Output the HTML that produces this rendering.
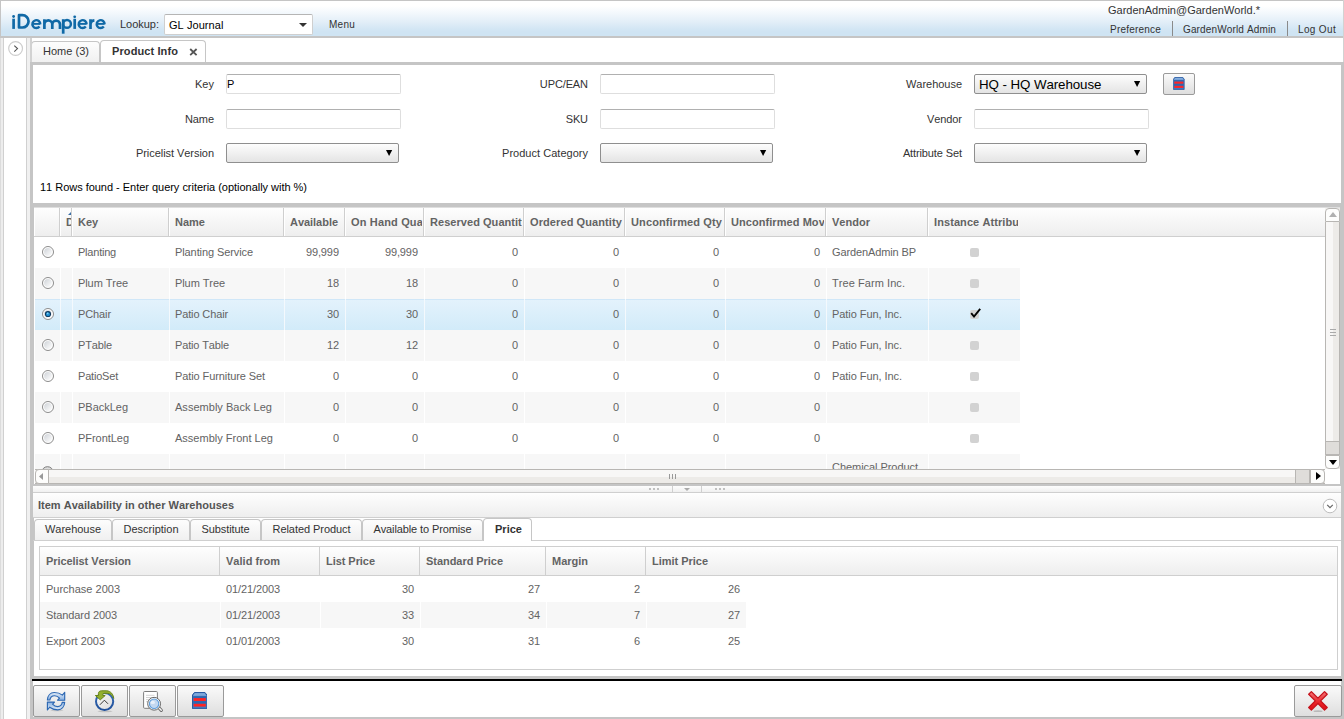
<!DOCTYPE html>
<html><head><meta charset="utf-8"><title>iDempiere</title>
<style>
*{box-sizing:border-box;margin:0;padding:0}
html,body{font-kerning:none;width:1344px;height:719px;overflow:hidden;background:#fff;font-family:"Liberation Sans",sans-serif;font-size:11px;color:#333}
div,span,svg{position:absolute}
.t{white-space:nowrap;line-height:14px;height:14px}
.r{text-align:right}
.b{font-weight:bold}
.sm{font-size:10px;color:#333}
.g{color:#636363}
.in{border:1px solid #dedede;border-top-color:#b0b0b0;border-radius:2px;background:#fff}
.sel{border:1px solid #8f8f8f;border-radius:2px;background:linear-gradient(#fdfdfd,#e4e4e4 )}
.btn{border:1px solid #9a9a9a;border-radius:2px;background:linear-gradient(#fafafa,#dedede)}
.hd{background:linear-gradient(#fefefe,#eeeeee)}
.tab{border:1px solid #c6c6c6;border-bottom:none;border-radius:4px 4px 0 0;background:linear-gradient(#fdfdfd,#f0f0f0)}
.tabs{border:1px solid #c6c6c6;border-bottom:none;border-radius:4px 4px 0 0;background:#fff}
</style></head><body>
<div class="" style="left:0px;top:0px;width:1344px;height:38px;background:linear-gradient(#fff 0,#fff 5px,#f1f7fc 13px,#e2eef8 21px,#d3e6f4 28px,#cfe4f3 31px,#cfe4f3 100%);border-top:1px solid #c5c5c5;border-left:1px solid #c5c5c5;border-bottom:2px solid #c5c5c5"></div>
<svg style="left:0;top:0" width="112" height="38" fill="none" stroke="#1069a6" stroke-width="2.7" stroke-linejoin="round">
<circle cx="13.6" cy="16.5" r="1.4" fill="#1069a6" stroke="none"/><path d="M13.6 18.7V28.9"/>
<path d="M19.0 15.2H22.4A6.15 6.15 0 0 1 22.4 27.5H19.0Z"/>
<path d="M32.9 23.9H40.3" stroke-width="1.9"/><path d="M40.3 24.3A3.95 3.95 0 1 0 39.5 26.5" stroke-width="2.4"/>
<path d="M44.4 28.9V19.2M44.4 24.4A3.95 3.95 0 0 1 52.3 24.4V28.9M52.3 24.4A3.85 3.85 0 0 1 60.0 24.4V28.9"/>
<path d="M63.2 19.2V33.7"/><circle cx="67.0" cy="23.9" r="3.9" stroke-width="2.5"/>
<circle cx="74.7" cy="16.8" r="1.4" fill="#1069a6" stroke="none"/><path d="M74.7 18.8V28.9"/>
<path d="M79.0 23.9H86.6" stroke-width="1.9"/><path d="M86.6 24.3A3.95 3.95 0 1 0 85.8 26.5" stroke-width="2.4"/>
<path d="M90.5 28.9V19.2M90.5 24.6A4.3 4.3 0 0 1 94.4 20.4"/>
<path d="M97.0 23.9H104.6" stroke-width="1.9"/><path d="M104.6 24.3A3.95 3.95 0 1 0 103.8 26.5" stroke-width="2.4"/>
</svg>
<span class="t " style="left:120px;top:17px;letter-spacing:-0.021px;color:#333">Lookup:</span>
<div class="" style="left:164px;top:14px;width:149px;height:21px;border:1px solid #cfcfcf;border-top-color:#b5b5b5;border-radius:2px;background:#fff"></div>
<span class="t " style="left:169px;top:18px;letter-spacing:0.019px;color:#000;letter-spacing:0.06px">GL Journal</span>
<svg style="left:299px;top:23px" width="8" height="4"><path d="M0 0H8L4 4Z" fill="#333"/></svg>
<span class="t sm" style="left:329px;top:18px;letter-spacing:0.246px;">Menu</span>
<span class="t " style="left:1108px;top:3px;letter-spacing:-0.071px;color:#333;letter-spacing:0.01px">GardenAdmin@GardenWorld.*</span>
<span class="t sm" style="left:1110px;top:23px;letter-spacing:0.208px;">Preference</span>
<span class="t sm" style="left:1183px;top:23px;letter-spacing:0.142px;">GardenWorld Admin</span>
<span class="t sm" style="left:1298px;top:23px;letter-spacing:0.346px;">Log Out</span>
<div class="" style="left:1172px;top:21px;width:1px;height:15px;background:#8a8a8a"></div>
<div class="" style="left:1287px;top:21px;width:1px;height:15px;background:#8a8a8a"></div>
<div class="" style="left:0px;top:38px;width:4px;height:681px;background:#ededed"></div>
<div class="" style="left:3px;top:38px;width:1px;height:681px;background:#d0d0d0"></div>
<div class="" style="left:0px;top:38px;width:1px;height:681px;background:#dcdcdc"></div>
<div class="" style="left:26px;top:38px;width:1px;height:681px;background:#d0d0d0"></div>
<div class="" style="left:27px;top:38px;width:3px;height:681px;background:#f0f0f0"></div>
<svg style="left:8px;top:40px" width="16" height="16"><circle cx="7.6" cy="8.5" r="6.9" fill="#fff" stroke="#cdcdcd" stroke-width="1.2"/><path d="M6.3 5.6L9.5 8.6L6.3 11.6" fill="none" stroke="#555" stroke-width="1.1"/></svg>
<div class="tab" style="left:31px;top:41px;width:69px;height:22px;"></div>
<span class="t " style="left:43px;top:44px;letter-spacing:0.02px;color:#333">Home (3)</span>
<div class="tabs" style="left:100px;top:40px;width:106px;height:22px;"></div>
<span class="t b" style="left:112px;top:44px;letter-spacing:0.102px;color:#333;z-index:4">Product Info</span>
<svg style="left:189px;top:48px;z-index:4" width="9" height="8"><path d="M1.2 1L7.6 7.2M7.6 1L1.2 7.2" stroke="#555" stroke-width="1.8"/></svg>
<div class="" style="left:30px;top:62px;width:1314px;height:3px;background:#c5c5c5"></div>
<div class="" style="left:30px;top:38px;width:2px;height:30px;background:#d2d2d2"></div>
<div class="" style="left:1343px;top:0px;width:1px;height:62px;background:#d2d2d2"></div>
<div class="" style="left:30px;top:62px;width:3px;height:657px;background:#c5c5c5"></div>
<div class="" style="left:1341px;top:62px;width:3px;height:657px;background:#c5c5c5"></div>
<div class="" style="left:30px;top:717px;width:1314px;height:2px;background:#c5c5c5"></div>
<span class="t r " style="right:1129.985px;top:77px;letter-spacing:0.015px;">Key</span>
<div class="in" style="left:226px;top:74px;width:175px;height:20px;"></div>
<span class="t " style="left:227px;top:77px;letter-spacing:-0.337px;color:#000">P</span>
<span class="t r " style="right:1130.086px;top:112px;letter-spacing:-0.086px;">Name</span>
<div class="in" style="left:226px;top:109px;width:175px;height:20px;"></div>
<span class="t r " style="right:1130.05px;top:146px;letter-spacing:-0.05px;">Pricelist Version</span>
<div class="sel" style="left:226px;top:143px;width:173px;height:20px;"></div>
<svg style="left:385.5px;top:150px" width="7" height="7"><path d="M0 0H6.2L3.1 6Z" fill="#000"/></svg>
<span class="t r " style="right:756.128px;top:77px;letter-spacing:-0.128px;">UPC/EAN</span>
<div class="in" style="left:600px;top:74px;width:175px;height:20px;"></div>
<span class="t r " style="right:756.206px;top:112px;letter-spacing:-0.206px;">SKU</span>
<div class="in" style="left:600px;top:109px;width:175px;height:20px;"></div>
<span class="t r " style="right:755.975px;top:146px;letter-spacing:0.025px;">Product Category</span>
<div class="sel" style="left:600px;top:143px;width:173px;height:20px;"></div>
<svg style="left:759.5px;top:150px" width="7" height="7"><path d="M0 0H6.2L3.1 6Z" fill="#000"/></svg>
<span class="t r " style="right:382.028px;top:77px;letter-spacing:-0.028px;">Warehouse</span>
<div class="sel" style="left:974px;top:74px;width:173px;height:20px;"></div>
<svg style="left:1133.5px;top:81px" width="7" height="7"><path d="M0 0H6.2L3.1 6Z" fill="#000"/></svg>
<span class="t " style="left:979px;top:77px;letter-spacing:0px;font-size:13.33px;color:#000;line-height:15px;letter-spacing:-0.08px">HQ - HQ Warehouse</span>
<span class="t r " style="right:382.078px;top:112px;letter-spacing:-0.078px;">Vendor</span>
<div class="in" style="left:974px;top:109px;width:175px;height:20px;"></div>
<span class="t r " style="right:382.118px;top:146px;letter-spacing:-0.118px;">Attribute Set</span>
<div class="sel" style="left:974px;top:143px;width:173px;height:20px;"></div>
<svg style="left:1133.5px;top:150px" width="7" height="7"><path d="M0 0H6.2L3.1 6Z" fill="#000"/></svg>
<div class="btn" style="left:1163px;top:73px;width:32px;height:22px;"></div>
<svg style="left:1173px;top:77.1px" width="11.6" height="12.9" viewBox="0 0 15.4 17.2"><defs><linearGradient id="wgb" x1="0" y1="0" x2="0" y2="1"><stop offset="0" stop-color="#8db4e2"/><stop offset="1" stop-color="#6d9ad1"/></linearGradient></defs><path d="M0.5 3 L2.4 0.5 H13 L14.9 3 V16.7 H0.5Z" fill="#3f78c0" stroke="#28589f" stroke-width="1" stroke-linejoin="round"/><path d="M1.3 3.2 L2.8 1.2 H12.6 L14.1 3.2 V4.2 H1.3Z" fill="url(#wgb)"/><rect x="1.3" y="4.2" width="12.8" height="1.9" fill="#2c66b0"/><rect x="1.6" y="6.1" width="12.2" height="3.0" fill="#ff2424"/><rect x="1.3" y="9.1" width="12.8" height="2.7" fill="#2c66b0"/><rect x="1.6" y="11.8" width="12.2" height="2.8" fill="#ff2424"/></svg>
<span class="t " style="left:40px;top:180px;letter-spacing:-0.025px;color:#000">11 Rows found - Enter query criteria (optionally with %)</span>
<div class="" style="left:33px;top:203px;width:1308px;height:4px;background:#c5c5c5"></div>
<div class="" style="left:33px;top:207px;width:1308px;height:1px;background:#dedede"></div>
<div class="" style="left:33px;top:203px;width:1px;height:473px;background:#c5c5c5"></div>
<div class="" style="left:1340px;top:203px;width:1px;height:283px;background:#c5c5c5"></div>
<div class="hd" style="left:35px;top:208px;width:1290px;height:29px;border-bottom:1px solid #cfcfcf"></div>
<div class="" style="left:34px;top:236px;width:1px;height:1px;background:#cfcfcf"></div>
<div class="" style="left:59px;top:208px;width:1px;height:28px;background:#cfcfcf"></div>
<div class="" style="left:60px;top:208px;width:1px;height:28px;background:#fff"></div>
<div class="" style="left:71px;top:208px;width:1px;height:28px;background:#cfcfcf"></div>
<div class="" style="left:72px;top:208px;width:1px;height:28px;background:#fff"></div>
<div class="" style="left:60px;top:207px;width:11px;height:29px;overflow:hidden"><span class="t b g" style="left:6px;top:8px;letter-spacing:0.056px">D</span></div>
<div class="" style="left:168px;top:208px;width:1px;height:28px;background:#cfcfcf"></div>
<div class="" style="left:169px;top:208px;width:1px;height:28px;background:#fff"></div>
<div class="" style="left:72px;top:207px;width:95px;height:29px;overflow:hidden"><span class="t b g" style="left:6px;top:8px;letter-spacing:-0.06px">Key</span></div>
<div class="" style="left:283px;top:208px;width:1px;height:28px;background:#cfcfcf"></div>
<div class="" style="left:284px;top:208px;width:1px;height:28px;background:#fff"></div>
<div class="" style="left:169px;top:207px;width:113px;height:29px;overflow:hidden"><span class="t b g" style="left:6px;top:8px;letter-spacing:0.01px">Name</span></div>
<div class="" style="left:344px;top:208px;width:1px;height:28px;background:#cfcfcf"></div>
<div class="" style="left:345px;top:208px;width:1px;height:28px;background:#fff"></div>
<div class="" style="left:284px;top:207px;width:59px;height:29px;overflow:hidden"><span class="t b g" style="left:6px;top:8px;letter-spacing:-0.034px">Available</span></div>
<div class="" style="left:423px;top:208px;width:1px;height:28px;background:#cfcfcf"></div>
<div class="" style="left:424px;top:208px;width:1px;height:28px;background:#fff"></div>
<div class="" style="left:345px;top:207px;width:77px;height:29px;overflow:hidden"><span class="t b g" style="left:6px;top:8px;letter-spacing:0.156px">On Hand Quantity</span></div>
<div class="" style="left:523px;top:208px;width:1px;height:28px;background:#cfcfcf"></div>
<div class="" style="left:524px;top:208px;width:1px;height:28px;background:#fff"></div>
<div class="" style="left:424px;top:207px;width:98px;height:29px;overflow:hidden"><span class="t b g" style="left:6px;top:8px;letter-spacing:0.047px">Reserved Quantity</span></div>
<div class="" style="left:624px;top:208px;width:1px;height:28px;background:#cfcfcf"></div>
<div class="" style="left:625px;top:208px;width:1px;height:28px;background:#fff"></div>
<div class="" style="left:524px;top:207px;width:99px;height:29px;overflow:hidden"><span class="t b g" style="left:6px;top:8px;letter-spacing:0.096px">Ordered Quantity</span></div>
<div class="" style="left:724px;top:208px;width:1px;height:28px;background:#cfcfcf"></div>
<div class="" style="left:725px;top:208px;width:1px;height:28px;background:#fff"></div>
<div class="" style="left:625px;top:207px;width:98px;height:29px;overflow:hidden"><span class="t b g" style="left:6px;top:8px;letter-spacing:0.118px">Unconfirmed Qty</span></div>
<div class="" style="left:825px;top:208px;width:1px;height:28px;background:#cfcfcf"></div>
<div class="" style="left:826px;top:208px;width:1px;height:28px;background:#fff"></div>
<div class="" style="left:725px;top:207px;width:99px;height:29px;overflow:hidden"><span class="t b g" style="left:6px;top:8px;letter-spacing:0.062px">Unconfirmed Move</span></div>
<div class="" style="left:927px;top:208px;width:1px;height:28px;background:#cfcfcf"></div>
<div class="" style="left:928px;top:208px;width:1px;height:28px;background:#fff"></div>
<div class="" style="left:826px;top:207px;width:100px;height:29px;overflow:hidden"><span class="t b g" style="left:6px;top:8px;letter-spacing:0.018px">Vendor</span></div>
<div class="" style="left:928px;top:207px;width:90px;height:29px;overflow:hidden"><span class="t b g" style="left:6px;top:8px;letter-spacing:0.083px">Instance Attribute</span></div>
<svg style="left:68px;top:212px" width="3" height="3"><path d="M3 0V3H0Z" fill="#3a6ea5"/></svg>
<div class="" style="left:35px;top:237px;width:985px;height:31px;background:#fff"></div>
<svg style="left:41px;top:245px" width="14" height="14"><defs><linearGradient id="rg" x1="0" y1="0" x2="1" y2="1"><stop offset="0" stop-color="#cfd3d8"/><stop offset="1" stop-color="#fff"/></linearGradient></defs><circle cx="7" cy="7" r="5.5" fill="#fff" stroke="#8c8c8c" stroke-width="1"/><circle cx="7" cy="7" r="3.9" fill="url(#rg)"/></svg>
<span class="t g" style="left:78px;top:245px;letter-spacing:-0.219px;">Planting</span>
<span class="t g" style="left:175px;top:245px;letter-spacing:-0.093px;">Planting Service</span>
<span class="t r g" style="right:1005.107px;top:245px;letter-spacing:-0.107px;">99,999</span>
<span class="t r g" style="right:926.107px;top:245px;letter-spacing:-0.107px;">99,999</span>
<span class="t r g" style="right:826.118px;top:245px;letter-spacing:-0.118px;">0</span>
<span class="t r g" style="right:725.118px;top:245px;letter-spacing:-0.118px;">0</span>
<span class="t r g" style="right:625.118px;top:245px;letter-spacing:-0.118px;">0</span>
<span class="t r g" style="right:524.118px;top:245px;letter-spacing:-0.118px;">0</span>
<span class="t g" style="left:832px;top:245px;letter-spacing:-0.114px;">GardenAdmin BP</span>
<div class="" style="left:970px;top:248px;width:9px;height:9px;background:#d2d2d2;border-radius:2px"></div>
<div class="" style="left:35px;top:268px;width:985px;height:31px;background:#f7f7f7"></div>
<div class="" style="left:60px;top:268px;width:1px;height:31px;background:#fff"></div>
<div class="" style="left:72px;top:268px;width:1px;height:31px;background:#fff"></div>
<div class="" style="left:169px;top:268px;width:1px;height:31px;background:#fff"></div>
<div class="" style="left:284px;top:268px;width:1px;height:31px;background:#fff"></div>
<div class="" style="left:345px;top:268px;width:1px;height:31px;background:#fff"></div>
<div class="" style="left:424px;top:268px;width:1px;height:31px;background:#fff"></div>
<div class="" style="left:524px;top:268px;width:1px;height:31px;background:#fff"></div>
<div class="" style="left:625px;top:268px;width:1px;height:31px;background:#fff"></div>
<div class="" style="left:725px;top:268px;width:1px;height:31px;background:#fff"></div>
<div class="" style="left:826px;top:268px;width:1px;height:31px;background:#fff"></div>
<div class="" style="left:928px;top:268px;width:1px;height:31px;background:#fff"></div>
<svg style="left:41px;top:276px" width="14" height="14"><defs><linearGradient id="rg" x1="0" y1="0" x2="1" y2="1"><stop offset="0" stop-color="#cfd3d8"/><stop offset="1" stop-color="#fff"/></linearGradient></defs><circle cx="7" cy="7" r="5.5" fill="#fff" stroke="#8c8c8c" stroke-width="1"/><circle cx="7" cy="7" r="3.9" fill="url(#rg)"/></svg>
<span class="t g" style="left:78px;top:276px;letter-spacing:-0.082px;">Plum Tree</span>
<span class="t g" style="left:175px;top:276px;letter-spacing:-0.082px;">Plum Tree</span>
<span class="t r g" style="right:1005.118px;top:276px;letter-spacing:-0.118px;">18</span>
<span class="t r g" style="right:926.118px;top:276px;letter-spacing:-0.118px;">18</span>
<span class="t r g" style="right:826.118px;top:276px;letter-spacing:-0.118px;">0</span>
<span class="t r g" style="right:725.118px;top:276px;letter-spacing:-0.118px;">0</span>
<span class="t r g" style="right:625.118px;top:276px;letter-spacing:-0.118px;">0</span>
<span class="t r g" style="right:524.118px;top:276px;letter-spacing:-0.118px;">0</span>
<span class="t g" style="left:832px;top:276px;letter-spacing:0.063px;">Tree Farm Inc.</span>
<div class="" style="left:970px;top:279px;width:9px;height:9px;background:#d2d2d2;border-radius:2px"></div>
<div class="" style="left:35px;top:299px;width:985px;height:31px;background:linear-gradient(#d0e7f8 0,#d0e7f8 1px,#e3f2fc 1px,#d2ebf9 100%)"></div>
<div class="" style="left:60px;top:299px;width:1px;height:31px;background:#f4f9fd"></div>
<div class="" style="left:72px;top:299px;width:1px;height:31px;background:#f4f9fd"></div>
<div class="" style="left:169px;top:299px;width:1px;height:31px;background:#f4f9fd"></div>
<div class="" style="left:284px;top:299px;width:1px;height:31px;background:#f4f9fd"></div>
<div class="" style="left:345px;top:299px;width:1px;height:31px;background:#f4f9fd"></div>
<div class="" style="left:424px;top:299px;width:1px;height:31px;background:#f4f9fd"></div>
<div class="" style="left:524px;top:299px;width:1px;height:31px;background:#f4f9fd"></div>
<div class="" style="left:625px;top:299px;width:1px;height:31px;background:#f4f9fd"></div>
<div class="" style="left:725px;top:299px;width:1px;height:31px;background:#f4f9fd"></div>
<div class="" style="left:826px;top:299px;width:1px;height:31px;background:#f4f9fd"></div>
<div class="" style="left:928px;top:299px;width:1px;height:31px;background:#f4f9fd"></div>
<svg style="left:41px;top:307px" width="14" height="14"><defs><linearGradient id="rg" x1="0" y1="0" x2="1" y2="1"><stop offset="0" stop-color="#cfd3d8"/><stop offset="1" stop-color="#fff"/></linearGradient></defs><circle cx="7" cy="7" r="5.5" fill="#fff" stroke="#8c8c8c" stroke-width="1"/><circle cx="7" cy="7" r="3.9" fill="url(#rg)"/><circle cx="7" cy="7" r="3.1" fill="#0e3a5f"/><circle cx="7" cy="7.2" r="2" fill="#1f8ed0"/><circle cx="6.6" cy="6.4" r="0.9" fill="#7fd0f5"/></svg>
<span class="t g" style="left:78px;top:307px;letter-spacing:-0.104px;">PChair</span>
<span class="t g" style="left:175px;top:307px;letter-spacing:-0.129px;">Patio Chair</span>
<span class="t r g" style="right:1005.118px;top:307px;letter-spacing:-0.118px;">30</span>
<span class="t r g" style="right:926.118px;top:307px;letter-spacing:-0.118px;">30</span>
<span class="t r g" style="right:826.118px;top:307px;letter-spacing:-0.118px;">0</span>
<span class="t r g" style="right:725.118px;top:307px;letter-spacing:-0.118px;">0</span>
<span class="t r g" style="right:625.118px;top:307px;letter-spacing:-0.118px;">0</span>
<span class="t r g" style="right:524.118px;top:307px;letter-spacing:-0.118px;">0</span>
<span class="t g" style="left:832px;top:307px;letter-spacing:-0.062px;">Patio Fun, Inc.</span>
<div class="" style="left:970px;top:310px;width:9px;height:9px;background:#d2d2d2;border-radius:2px"></div>
<svg style="left:968.5px;top:307px" width="13" height="12"><path d="M2.2 6.2L5 9.5L11.2 1.8" fill="none" stroke="#000" stroke-width="1.9"/></svg>
<div class="" style="left:35px;top:330px;width:985px;height:31px;background:#f7f7f7"></div>
<div class="" style="left:60px;top:330px;width:1px;height:31px;background:#fff"></div>
<div class="" style="left:72px;top:330px;width:1px;height:31px;background:#fff"></div>
<div class="" style="left:169px;top:330px;width:1px;height:31px;background:#fff"></div>
<div class="" style="left:284px;top:330px;width:1px;height:31px;background:#fff"></div>
<div class="" style="left:345px;top:330px;width:1px;height:31px;background:#fff"></div>
<div class="" style="left:424px;top:330px;width:1px;height:31px;background:#fff"></div>
<div class="" style="left:524px;top:330px;width:1px;height:31px;background:#fff"></div>
<div class="" style="left:625px;top:330px;width:1px;height:31px;background:#fff"></div>
<div class="" style="left:725px;top:330px;width:1px;height:31px;background:#fff"></div>
<div class="" style="left:826px;top:330px;width:1px;height:31px;background:#fff"></div>
<div class="" style="left:928px;top:330px;width:1px;height:31px;background:#fff"></div>
<svg style="left:41px;top:338px" width="14" height="14"><defs><linearGradient id="rg" x1="0" y1="0" x2="1" y2="1"><stop offset="0" stop-color="#cfd3d8"/><stop offset="1" stop-color="#fff"/></linearGradient></defs><circle cx="7" cy="7" r="5.5" fill="#fff" stroke="#8c8c8c" stroke-width="1"/><circle cx="7" cy="7" r="3.9" fill="url(#rg)"/></svg>
<span class="t g" style="left:78px;top:338px;letter-spacing:-0.145px;">PTable</span>
<span class="t g" style="left:175px;top:338px;letter-spacing:-0.151px;">Patio Table</span>
<span class="t r g" style="right:1005.118px;top:338px;letter-spacing:-0.118px;">12</span>
<span class="t r g" style="right:926.118px;top:338px;letter-spacing:-0.118px;">12</span>
<span class="t r g" style="right:826.118px;top:338px;letter-spacing:-0.118px;">0</span>
<span class="t r g" style="right:725.118px;top:338px;letter-spacing:-0.118px;">0</span>
<span class="t r g" style="right:625.118px;top:338px;letter-spacing:-0.118px;">0</span>
<span class="t r g" style="right:524.118px;top:338px;letter-spacing:-0.118px;">0</span>
<span class="t g" style="left:832px;top:338px;letter-spacing:-0.062px;">Patio Fun, Inc.</span>
<div class="" style="left:970px;top:341px;width:9px;height:9px;background:#d2d2d2;border-radius:2px"></div>
<div class="" style="left:35px;top:361px;width:985px;height:31px;background:#fff"></div>
<svg style="left:41px;top:369px" width="14" height="14"><defs><linearGradient id="rg" x1="0" y1="0" x2="1" y2="1"><stop offset="0" stop-color="#cfd3d8"/><stop offset="1" stop-color="#fff"/></linearGradient></defs><circle cx="7" cy="7" r="5.5" fill="#fff" stroke="#8c8c8c" stroke-width="1"/><circle cx="7" cy="7" r="3.9" fill="url(#rg)"/></svg>
<span class="t g" style="left:78px;top:369px;letter-spacing:-0.198px;">PatioSet</span>
<span class="t g" style="left:175px;top:369px;letter-spacing:-0.09px;">Patio Furniture Set</span>
<span class="t r g" style="right:1005.118px;top:369px;letter-spacing:-0.118px;">0</span>
<span class="t r g" style="right:926.118px;top:369px;letter-spacing:-0.118px;">0</span>
<span class="t r g" style="right:826.118px;top:369px;letter-spacing:-0.118px;">0</span>
<span class="t r g" style="right:725.118px;top:369px;letter-spacing:-0.118px;">0</span>
<span class="t r g" style="right:625.118px;top:369px;letter-spacing:-0.118px;">0</span>
<span class="t r g" style="right:524.118px;top:369px;letter-spacing:-0.118px;">0</span>
<span class="t g" style="left:832px;top:369px;letter-spacing:-0.062px;">Patio Fun, Inc.</span>
<div class="" style="left:970px;top:372px;width:9px;height:9px;background:#d2d2d2;border-radius:2px"></div>
<div class="" style="left:35px;top:392px;width:985px;height:31px;background:#f7f7f7"></div>
<div class="" style="left:60px;top:392px;width:1px;height:31px;background:#fff"></div>
<div class="" style="left:72px;top:392px;width:1px;height:31px;background:#fff"></div>
<div class="" style="left:169px;top:392px;width:1px;height:31px;background:#fff"></div>
<div class="" style="left:284px;top:392px;width:1px;height:31px;background:#fff"></div>
<div class="" style="left:345px;top:392px;width:1px;height:31px;background:#fff"></div>
<div class="" style="left:424px;top:392px;width:1px;height:31px;background:#fff"></div>
<div class="" style="left:524px;top:392px;width:1px;height:31px;background:#fff"></div>
<div class="" style="left:625px;top:392px;width:1px;height:31px;background:#fff"></div>
<div class="" style="left:725px;top:392px;width:1px;height:31px;background:#fff"></div>
<div class="" style="left:826px;top:392px;width:1px;height:31px;background:#fff"></div>
<div class="" style="left:928px;top:392px;width:1px;height:31px;background:#fff"></div>
<svg style="left:41px;top:400px" width="14" height="14"><defs><linearGradient id="rg" x1="0" y1="0" x2="1" y2="1"><stop offset="0" stop-color="#cfd3d8"/><stop offset="1" stop-color="#fff"/></linearGradient></defs><circle cx="7" cy="7" r="5.5" fill="#fff" stroke="#8c8c8c" stroke-width="1"/><circle cx="7" cy="7" r="3.9" fill="url(#rg)"/></svg>
<span class="t g" style="left:78px;top:400px;letter-spacing:-0.018px;">PBackLeg</span>
<span class="t g" style="left:175px;top:400px;letter-spacing:0.024px;">Assembly Back Leg</span>
<span class="t r g" style="right:1005.118px;top:400px;letter-spacing:-0.118px;">0</span>
<span class="t r g" style="right:926.118px;top:400px;letter-spacing:-0.118px;">0</span>
<span class="t r g" style="right:826.118px;top:400px;letter-spacing:-0.118px;">0</span>
<span class="t r g" style="right:725.118px;top:400px;letter-spacing:-0.118px;">0</span>
<span class="t r g" style="right:625.118px;top:400px;letter-spacing:-0.118px;">0</span>
<span class="t r g" style="right:524.118px;top:400px;letter-spacing:-0.118px;">0</span>
<div class="" style="left:970px;top:403px;width:9px;height:9px;background:#d2d2d2;border-radius:2px"></div>
<div class="" style="left:35px;top:423px;width:985px;height:31px;background:#fff"></div>
<svg style="left:41px;top:431px" width="14" height="14"><defs><linearGradient id="rg" x1="0" y1="0" x2="1" y2="1"><stop offset="0" stop-color="#cfd3d8"/><stop offset="1" stop-color="#fff"/></linearGradient></defs><circle cx="7" cy="7" r="5.5" fill="#fff" stroke="#8c8c8c" stroke-width="1"/><circle cx="7" cy="7" r="3.9" fill="url(#rg)"/></svg>
<span class="t g" style="left:78px;top:431px;letter-spacing:-0.04px;">PFrontLeg</span>
<span class="t g" style="left:175px;top:431px;letter-spacing:0.01px;">Assembly Front Leg</span>
<span class="t r g" style="right:1005.118px;top:431px;letter-spacing:-0.118px;">0</span>
<span class="t r g" style="right:926.118px;top:431px;letter-spacing:-0.118px;">0</span>
<span class="t r g" style="right:826.118px;top:431px;letter-spacing:-0.118px;">0</span>
<span class="t r g" style="right:725.118px;top:431px;letter-spacing:-0.118px;">0</span>
<span class="t r g" style="right:625.118px;top:431px;letter-spacing:-0.118px;">0</span>
<span class="t r g" style="right:524.118px;top:431px;letter-spacing:-0.118px;">0</span>
<div class="" style="left:970px;top:434px;width:9px;height:9px;background:#d2d2d2;border-radius:2px"></div>
<div class="" style="left:35px;top:454px;width:985px;height:15px;background:#f7f7f7"></div>
<div class="" style="left:60px;top:454px;width:1px;height:15px;background:#fff"></div>
<div class="" style="left:72px;top:454px;width:1px;height:15px;background:#fff"></div>
<div class="" style="left:169px;top:454px;width:1px;height:15px;background:#fff"></div>
<div class="" style="left:284px;top:454px;width:1px;height:15px;background:#fff"></div>
<div class="" style="left:345px;top:454px;width:1px;height:15px;background:#fff"></div>
<div class="" style="left:424px;top:454px;width:1px;height:15px;background:#fff"></div>
<div class="" style="left:524px;top:454px;width:1px;height:15px;background:#fff"></div>
<div class="" style="left:625px;top:454px;width:1px;height:15px;background:#fff"></div>
<div class="" style="left:725px;top:454px;width:1px;height:15px;background:#fff"></div>
<div class="" style="left:826px;top:454px;width:1px;height:15px;background:#fff"></div>
<div class="" style="left:928px;top:454px;width:1px;height:15px;background:#fff"></div>
<div class="" style="left:832px;top:460px;width:100px;height:9px;overflow:hidden"><span class="t g" style="left:0;top:0;letter-spacing:-0.05px">Chemical Product</span></div>
<div class="" style="left:41px;top:466px;width:13px;height:3px;overflow:hidden"><svg style="left:0;top:0" width="13" height="13"><circle cx="6.5" cy="6.5" r="5.8" fill="#ddd" stroke="#777"/></svg></div>
<div class="" style="left:1325px;top:208px;width:15px;height:261px;background:linear-gradient(90deg,#f6f5f3,#f6f5f3 50%,#eceae7 50%)"></div>
<div class="" style="left:1325px;top:222px;width:15px;height:219px;border-left:1px solid #b8b6b3;border-right:1px solid #b8b6b3;background:linear-gradient(90deg,#f8f7f6,#f8f7f6 50%,#edebe8 50%)"></div>
<div class="" style="left:1325px;top:441px;width:15px;height:14px;border:1px solid #b8b6b3;background:#dfddda"></div>
<div class="" style="left:1325px;top:208px;width:15px;height:14px;border:1px solid #b8b6b3;border-radius:4px 4px 0 0;background:#fdfdfc"></div>
<div class="" style="left:1325px;top:455px;width:15px;height:14px;border:1px solid #b8b6b3;border-radius:0 0 4px 4px;background:#fdfdfc"></div>
<svg style="left:1329px;top:212px" width="8" height="6"><path d="M0 5H8L4 0Z" fill="#b0b0b0"/></svg>
<svg style="left:1329px;top:460px" width="8" height="5"><path d="M0 0H8L4 5Z" fill="#000"/></svg>
<div class="" style="left:1330px;top:329px;width:6px;height:1px;background:#aaa"></div>
<div class="" style="left:1330px;top:332px;width:6px;height:1px;background:#aaa"></div>
<div class="" style="left:1330px;top:335px;width:6px;height:1px;background:#aaa"></div>
<div class="" style="left:35px;top:469px;width:1290px;height:15px;border-top:1px solid #b8b6b3;border-bottom:1px solid #b8b6b3;background:linear-gradient(#f8f7f6,#f8f7f6 54%,#edebe8 54%)"></div>
<div class="" style="left:1295px;top:469px;width:15px;height:15px;border:1px solid #b8b6b3;background:#dfddda"></div>
<div class="" style="left:35px;top:469px;width:14px;height:15px;border:1px solid #b8b6b3;border-radius:4px 0 0 4px;background:#fdfdfc"></div>
<div class="" style="left:1310px;top:469px;width:15px;height:15px;border:1px solid #b8b6b3;border-radius:0 4px 4px 0;background:#fdfdfc"></div>
<svg style="left:39px;top:473px" width="4" height="7"><path d="M4 0V7L0 3.5Z" fill="#999"/></svg>
<svg style="left:1316px;top:472px" width="5" height="8"><path d="M0 0V8L5 4Z" fill="#000"/></svg>
<div class="" style="left:669px;top:474px;width:1px;height:5px;background:#999"></div>
<div class="" style="left:672px;top:474px;width:1px;height:5px;background:#999"></div>
<div class="" style="left:675px;top:474px;width:1px;height:5px;background:#999"></div>
<div class="" style="left:33px;top:484px;width:1308px;height:2px;background:#c5c5c5"></div>
<div class="" style="left:33px;top:486px;width:1308px;height:6px;background:linear-gradient(#fdfdfd,#f0f0f0)"></div>
<div class="" style="left:33px;top:492px;width:1308px;height:1px;background:#cfcfcf"></div>
<div class="" style="left:672px;top:486px;width:1px;height:6px;background:#cfcfcf"></div>
<div class="" style="left:701px;top:486px;width:1px;height:6px;background:#cfcfcf"></div>
<div class="" style="left:649px;top:488px;width:2px;height:2px;background:#c0c0c0"></div>
<div class="" style="left:715px;top:488px;width:2px;height:2px;background:#c0c0c0"></div>
<div class="" style="left:653px;top:488px;width:2px;height:2px;background:#c0c0c0"></div>
<div class="" style="left:719px;top:488px;width:2px;height:2px;background:#c0c0c0"></div>
<div class="" style="left:657px;top:488px;width:2px;height:2px;background:#c0c0c0"></div>
<div class="" style="left:723px;top:488px;width:2px;height:2px;background:#c0c0c0"></div>
<svg style="left:684px;top:488px" width="6" height="3"><path d="M0 0H6L3 3Z" fill="#aaa"/></svg>
<div class="hd" style="left:33px;top:493px;width:1308px;height:25px;border-bottom:1px solid #cfcfcf"></div>
<span class="t b" style="left:38px;top:498px;letter-spacing:0.011px;color:#555">Item Availability in other Warehouses</span>
<svg style="left:1322px;top:498px" width="16" height="16"><circle cx="8" cy="8" r="6.8" fill="#fff" stroke="#bdbdbd"/><path d="M5.2 6.8L8 9.6L10.8 6.8" fill="none" stroke="#666" stroke-width="1.2"/></svg>
<div class="" style="left:33px;top:540px;width:1308px;height:1px;background:#cfcfcf"></div>
<div class="tab" style="left:34px;top:519px;width:78px;height:21px;"></div>
<span class="t" style="left:34px;width:78px;text-align:center;top:522px;color:#333;letter-spacing:-0.028px">Warehouse</span>
<div class="tab" style="left:112px;top:519px;width:78px;height:21px;"></div>
<span class="t" style="left:112px;width:78px;text-align:center;top:522px;color:#333;letter-spacing:-0.002px">Description</span>
<div class="tab" style="left:190px;top:519px;width:71px;height:21px;"></div>
<span class="t" style="left:190px;width:71px;text-align:center;top:522px;color:#333;letter-spacing:-0.092px">Substitute</span>
<div class="tab" style="left:261px;top:519px;width:101px;height:21px;"></div>
<span class="t" style="left:261px;width:101px;text-align:center;top:522px;color:#333;letter-spacing:-0.059px">Related Product</span>
<div class="tab" style="left:362px;top:519px;width:121px;height:21px;"></div>
<span class="t" style="left:362px;width:121px;text-align:center;top:522px;color:#333;letter-spacing:-0.113px">Available to Promise</span>
<div class="tabs" style="left:483px;top:518px;width:49px;height:23px;"></div>
<span class="t b" style="left:484px;width:49px;text-align:center;top:522px;color:#333">Price</span>
<div class="" style="left:39px;top:546px;width:1299px;height:124px;border:1px solid #cfcfcf"></div>
<div class="hd" style="left:40px;top:547px;width:1297px;height:29px;border-bottom:1px solid #cfcfcf"></div>
<div class="" style="left:219px;top:547px;width:1px;height:28px;background:#cfcfcf"></div>
<span class="t b g" style="left:46px;top:554px;letter-spacing:-0.071px;">Pricelist Version</span>
<div class="" style="left:319px;top:547px;width:1px;height:28px;background:#cfcfcf"></div>
<span class="t b g" style="left:226px;top:554px;letter-spacing:0.021px;">Valid from</span>
<div class="" style="left:419px;top:547px;width:1px;height:28px;background:#cfcfcf"></div>
<span class="t b g" style="left:326px;top:554px;letter-spacing:-0.052px;">List Price</span>
<div class="" style="left:545px;top:547px;width:1px;height:28px;background:#cfcfcf"></div>
<span class="t b g" style="left:426px;top:554px;letter-spacing:-0.046px;">Standard Price</span>
<div class="" style="left:645px;top:547px;width:1px;height:28px;background:#cfcfcf"></div>
<span class="t b g" style="left:552px;top:554px;letter-spacing:-0.009px;">Margin</span>
<span class="t b g" style="left:652px;top:554px;letter-spacing:-0.022px;">Limit Price</span>
<span class="t g" style="left:46px;top:582px;letter-spacing:0.0px;">Purchase 2003</span>
<span class="t g" style="left:226px;top:582px;letter-spacing:-0.105px;">01/21/2003</span>
<span class="t r g" style="right:930.118px;top:582px;letter-spacing:-0.118px;">30</span>
<span class="t r g" style="right:804.118px;top:582px;letter-spacing:-0.118px;">27</span>
<span class="t r g" style="right:704.118px;top:582px;letter-spacing:-0.118px;">2</span>
<span class="t r g" style="right:604.118px;top:582px;letter-spacing:-0.118px;">26</span>
<div class="" style="left:40px;top:602px;width:706px;height:26px;background:#f7f7f7"></div>
<div class="" style="left:220px;top:602px;width:1px;height:26px;background:#fff"></div>
<div class="" style="left:320px;top:602px;width:1px;height:26px;background:#fff"></div>
<div class="" style="left:420px;top:602px;width:1px;height:26px;background:#fff"></div>
<div class="" style="left:546px;top:602px;width:1px;height:26px;background:#fff"></div>
<div class="" style="left:646px;top:602px;width:1px;height:26px;background:#fff"></div>
<span class="t g" style="left:46px;top:608px;letter-spacing:-0.09px;">Standard 2003</span>
<span class="t g" style="left:226px;top:608px;letter-spacing:-0.105px;">01/21/2003</span>
<span class="t r g" style="right:930.118px;top:608px;letter-spacing:-0.118px;">33</span>
<span class="t r g" style="right:804.118px;top:608px;letter-spacing:-0.118px;">34</span>
<span class="t r g" style="right:704.118px;top:608px;letter-spacing:-0.118px;">7</span>
<span class="t r g" style="right:604.118px;top:608px;letter-spacing:-0.118px;">27</span>
<span class="t g" style="left:46px;top:634px;letter-spacing:-0.029px;">Export 2003</span>
<span class="t g" style="left:226px;top:634px;letter-spacing:-0.105px;">01/01/2003</span>
<span class="t r g" style="right:930.118px;top:634px;letter-spacing:-0.118px;">30</span>
<span class="t r g" style="right:804.118px;top:634px;letter-spacing:-0.118px;">31</span>
<span class="t r g" style="right:704.118px;top:634px;letter-spacing:-0.118px;">6</span>
<span class="t r g" style="right:604.118px;top:634px;letter-spacing:-0.118px;">25</span>
<div class="" style="left:32px;top:676px;width:1310px;height:3px;background:#c5c5c5"></div>
<div class="" style="left:32px;top:679px;width:1310px;height:2px;background:#000"></div>
<div class="btn" style="left:33px;top:685px;width:47px;height:32px;"></div>
<div class="btn" style="left:81px;top:685px;width:47px;height:32px;"></div>
<div class="btn" style="left:129px;top:685px;width:47px;height:32px;"></div>
<div class="btn" style="left:177px;top:685px;width:47px;height:32px;"></div>
<div class="btn" style="left:1294px;top:685px;width:48px;height:32px;"></div>
<svg style="left:46px;top:691px" width="20" height="21" viewBox="0 0 20 21"><defs><linearGradient id="rf" x1="0" y1="0" x2="0" y2="1"><stop offset="0" stop-color="#e6eff9"/><stop offset="1" stop-color="#86afe0"/></linearGradient></defs><ellipse cx="11" cy="19.3" rx="6.5" ry="0.9" fill="#000" opacity=".13"/><g fill="url(#rf)" stroke="#2c67b2" stroke-width="1.15" stroke-linejoin="round"><path id="ra" d="M1.4 9C1.6 4.6 4.4 1.5 8.3 1.5C11.4 1.5 14.1 2.3 16.4 4.1L18.7 1.3V9.2H11.6L13.5 7.1C12.1 5.5 10.5 4.7 8.6 4.7C6 4.7 4.2 6.4 3.9 9Z"/><use href="#ra" transform="rotate(180 10.05 10.15)"/></g></svg>
<svg style="left:93px;top:688px" width="24" height="25" viewBox="93 688 24 25"><defs><linearGradient id="cf" x1="0" y1="0" x2="1" y2="1"><stop offset="0" stop-color="#fafafa"/><stop offset="1" stop-color="#dadada"/></linearGradient><linearGradient id="cr" x1="0" y1="0" x2="0" y2="1"><stop offset="0" stop-color="#3a6db5"/><stop offset="1" stop-color="#1f4f9a"/></linearGradient></defs><ellipse cx="105" cy="711.3" rx="7.5" ry="0.9" fill="#000" opacity=".15"/><circle cx="104.6" cy="701.5" r="8.6" fill="url(#cf)" stroke="url(#cr)" stroke-width="2"/><path d="M99.9 704.8L104.4 700.2L108 703.8" fill="none" stroke="#222" stroke-width=".9"/><path d="M100.3 699.8L95.3 695.5H98.4V693.6C98.4 691.7 99.7 690.8 101.6 690.8H106.8C110.6 691.1 113.4 694.2 113.7 698.4C112.6 695.2 110.3 693.3 107 693.3H104.2C103.3 693.3 102.8 693.7 102.8 694.5V695.5H105.2Z" fill="#93b02f" stroke="#67831a" stroke-width="1" stroke-linejoin="round"/></svg>
<svg style="left:141px;top:689px" width="24" height="24" viewBox="141 689 24 24"><rect x="143.6" y="691.5" width="13.8" height="16.8" rx="1" fill="#fff" stroke="#7d7d7d" stroke-width="1"/><path d="M146 695.3H154.5M146 697.5H152M146 699.6H150M146 701.7H149" stroke="#c8c8c8" stroke-width=".8"/><path d="M158.6 707.4L161.3 710.3" stroke="#6a6a6a" stroke-width="3.2" stroke-linecap="round"/><path d="M159.4 708.2L161.3 710.3" stroke="#f4f4f4" stroke-width="1.4" stroke-linecap="round"/><circle cx="154.1" cy="703.75" r="6.4" fill="#fff" stroke="#666" stroke-width="1"/><circle cx="154.1" cy="703.75" r="4.7" fill="#c3d8f0" stroke="#5f9edc" stroke-width="1.1"/><ellipse cx="152.8" cy="702.4" rx="2.2" ry="1.7" fill="#e8f0fa"/></svg>
<svg style="left:192px;top:691.8px" width="15.4" height="17.2" viewBox="0 0 15.4 17.2"><defs><linearGradient id="wga" x1="0" y1="0" x2="0" y2="1"><stop offset="0" stop-color="#8db4e2"/><stop offset="1" stop-color="#6d9ad1"/></linearGradient></defs><path d="M0.5 3 L2.4 0.5 H13 L14.9 3 V16.7 H0.5Z" fill="#3f78c0" stroke="#28589f" stroke-width="1" stroke-linejoin="round"/><path d="M1.3 3.2 L2.8 1.2 H12.6 L14.1 3.2 V4.2 H1.3Z" fill="url(#wga)"/><rect x="1.3" y="4.2" width="12.8" height="1.9" fill="#2c66b0"/><rect x="1.6" y="6.1" width="12.2" height="3.0" fill="#ff2424"/><rect x="1.3" y="9.1" width="12.8" height="2.7" fill="#2c66b0"/><rect x="1.6" y="11.8" width="12.2" height="2.8" fill="#ff2424"/></svg>
<svg style="left:1305px;top:688px" width="26" height="26" viewBox="1305 688 26 26"><defs><linearGradient id="xr" gradientUnits="userSpaceOnUse" x1="0" y1="691" x2="0" y2="711"><stop offset="0" stop-color="#f47a7d"/><stop offset=".55" stop-color="#e9262b"/><stop offset="1" stop-color="#e00a10"/></linearGradient></defs><ellipse cx="1318" cy="711.2" rx="4.5" ry="0.9" fill="#000" opacity=".18"/><path d="M1311.37 691.59L1317.95 698.16L1324.53 691.59L1327.21 694.27L1320.64 700.85L1327.21 707.43L1324.53 710.11L1317.95 703.54L1311.37 710.11L1308.69 707.43L1315.26 700.85L1308.69 694.27Z" fill="url(#xr)" stroke="#c5121b" stroke-width="1.3" stroke-linejoin="round"/></svg>
</body></html>
